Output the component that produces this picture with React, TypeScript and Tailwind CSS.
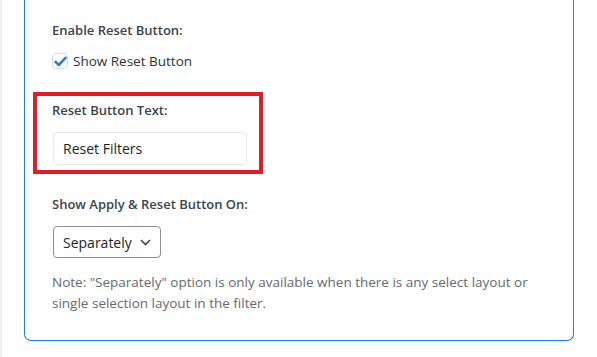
import React from "react";

export default function App() {
  const font = { fontFamily: '"Open Sans", "Noto Sans", sans-serif' };
  return (
    <div className="flex h-[357px] w-[597px] overflow-hidden bg-white" style={font}>
      <div className="w-[2px] shrink-0 bg-[#f0f0f1]" />
      <div className="pl-[22px]">
        <div className="h-[341px] w-[550px] rounded-b-[7px] border-x border-b border-[#1b7ce8] bg-white shadow-[0_2px_1px_rgba(0,0,0,0.03)]">
          <div className="pl-[27px] pt-[20px]">
            <div className="text-[13px] leading-[20px] font-semibold text-[#3c434a]">Enable Reset Button:</div>
            <div className="mt-[11px] flex h-[20px] items-center gap-[5px]">
              <span className="flex h-[16px] w-[16px] items-center justify-center rounded-[4px] border border-[#dcdcde] bg-white">
                <svg width="13" height="11" viewBox="0 0 13 11">
                  <path d="M1.5 5.8 L4.8 9 L11.5 1.8" fill="none" stroke="#2f7fc8" strokeWidth="2.6" strokeLinecap="round" strokeLinejoin="round" />
                </svg>
              </span>
              <span className="text-[13.5px] leading-[20px] text-[#2c3338]">Show Reset Button</span>
            </div>

            <div className="relative mt-[29px]">
              <div className="pointer-events-none absolute left-[-19px] top-[-8px] h-[82px] w-[230px] border-4 border-[#e31b23]" />
              <div className="text-[13px] leading-[20px] font-semibold text-[#3c434a]">Reset Button Text:</div>
              <div className="ml-[1px] mt-[12px] flex h-[33px] w-[194px] items-center rounded-[4px] border border-[#e6e6e8] pl-[9px] text-[14px] text-[#1d2327]">
                Reset Filters
              </div>
            </div>

            <div className="mt-[29px] text-[13px] leading-[20px] font-semibold text-[#3c434a]">Show Apply &amp; Reset Button On:</div>
            <div className="ml-[1px] mt-[12px] flex h-[32px] w-[108px] items-center justify-between rounded-[4px] border border-[#8c8f94] pl-[9px] pr-[9px] text-[14px] text-[#1d2327]">
              <span>Separately</span>
              <svg width="11" height="7" viewBox="0 0 11 7">
                <path d="M1 1 L5.5 5.5 L10 1" fill="none" stroke="#3c434a" strokeWidth="1.6" />
              </svg>
            </div>
            <p className="mt-[14px] w-[500px] text-[13.5px] leading-[21px] text-[#646970]">
              Note: "Separately" option is only available when there is any select layout or single selection layout in the filter.
            </p>
          </div>
        </div>
      </div>
    </div>
  );
}
